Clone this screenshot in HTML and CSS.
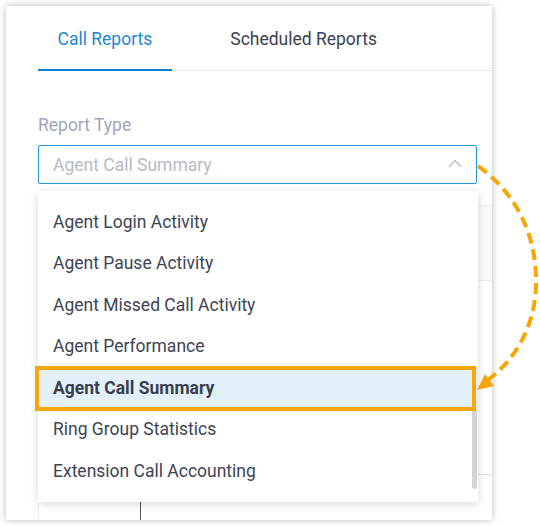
FILE: index.html
```html
<!DOCTYPE html>
<html lang="en">
<head>
<meta charset="utf-8">
<title>Call Reports</title>
<link rel="stylesheet" href="styles.css">
</head>
<body>
<div class="page">
  <div class="panel">
    <div class="tabs">
      <div class="tab active">Call Reports</div>
      <div class="tab">Scheduled Reports</div>
    </div>
    <div class="content">
      <div class="label">Report Type</div>
      <div class="select-wrap">
        <div class="select">
          <span class="placeholder">Agent Call Summary</span>
          <svg class="chevron" width="14" height="9" viewBox="0 0 14 9"><path d="M1 8 L7 1.5 L13 8" fill="none" stroke="#b9bdc6" stroke-width="1.3"/></svg>
        </div>
        <div class="dropdown">
          <ul class="options">
            <li class="option">Agent Login Activity</li>
            <li class="option">Agent Pause Activity</li>
            <li class="option">Agent Missed Call Activity</li>
            <li class="option">Agent Performance</li>
            <li class="option selected">Agent Call Summary</li>
            <li class="option">Ring Group Statistics</li>
            <li class="option">Extension Call Accounting</li>
          </ul>
          <div class="thumb"></div>
        </div>
      </div>
      <div class="table">
        <div class="thead"></div>
        <div class="tbody"></div>
        <div class="trow"><div class="cell first"></div><div class="cell"></div></div>
      </div>
    </div>
  </div>
  <svg class="arrow" width="540" height="526" viewBox="0 0 540 526">
    <path d="M478 166 C520 196 537 240 536 285 C535 330 512 362 488 380" fill="none" stroke="#f6a609" stroke-width="4" stroke-dasharray="11 6"/>
    <polygon points="477,390 494,386 485,374" fill="#f6a609"/>
  </svg>
</div>
</body>
</html>
```
FILE: styles.css
```css
* { box-sizing: border-box; }
html, body { margin: 0; padding: 0; background: #fff; }
body { font-family: Roboto, "Noto Sans", Arial, sans-serif; }
.page { position: relative; width: 540px; height: 526px; padding: 6px; }
.panel {
  width: 486px;
  height: 514px;
  background: #fff;
  box-shadow: 0 0 7px rgba(0,0,0,0.28);
  overflow: hidden;
  position: relative;
}
.tabs {
  display: flex;
  gap: 39px;
  height: 65px;
  margin-left: 32px;
  border-bottom: 1px solid #e7e7f0;
}
.tab {
  position: relative;
  padding: 2px 19.5px 0;
  display: flex;
  align-items: center;
  font-size: 17.5px;
  color: #3a4150;
}
.tab.active { color: #1f86d1; }
.tab.active::after {
  content: "";
  position: absolute;
  left: 0; right: 0; bottom: -1px;
  height: 2px;
  background: #0b7fcf;
}
.content { padding: 0 15px 0 32px; }
.label {
  margin-top: 44px;
  font-size: 17.5px;
  line-height: 20px;
  color: #9ea6b7;
}
.select-wrap { position: relative; margin-top: 10px; }
.select {
  height: 39px;
  border: 1px solid #2196de;
  border-radius: 2px;
  display: flex;
  align-items: center;
  justify-content: space-between;
  padding: 0 14px 0 14px;
}
.placeholder { font-size: 17.5px; color: #b6bac4; }
.chevron { display: block; margin-top: -3px; }
.dropdown {
  position: absolute;
  left: 0;
  top: 45.5px;
  width: 440px;
  height: 311.5px;
  background: #fff;
  box-shadow: 0 2px 9px rgba(0,0,0,0.16);
  z-index: 5;
}
.options { list-style: none; margin: 0; padding: 11px 0 0 0; }
.option {
  position: relative;
  height: 41.6px;
  line-height: 41.6px;
  padding-left: 15px;
  font-size: 17.5px;
  color: #3c4454;
  white-space: nowrap;
}
.option.selected {
  background: #e4f0f9;
  font-weight: 700;
  color: #383f4e;
  z-index: 2;
}
.option.selected::after {
  content: "";
  position: absolute;
  left: -3px; right: 2px; top: -2px; bottom: -2px;
  border: 4.5px solid #f6a609;
}
.thumb {
  position: absolute;
  right: 1px;
  top: 190px;
  width: 5px;
  height: 108px;
  border-radius: 3px;
  background: #d3d3d3;
}
.table {
  margin-top: 21px;
  margin-right: -15px;
  border-left: 1px solid #eeeef2;
}
.thead {
  height: 76px;
  border-top: 1px dashed #e0e0ea;
  border-bottom: 1px solid #ececf2;
  background: #fafafd;
}
.tbody { height: 194px; border-bottom: 1px solid #e2e2e6; }
.trow { display: flex; height: 60px; }
.cell.first { width: 102px; border-right: 1px solid #555; }
.arrow { position: absolute; left: 0; top: 0; pointer-events: none; z-index: 10; }
```
